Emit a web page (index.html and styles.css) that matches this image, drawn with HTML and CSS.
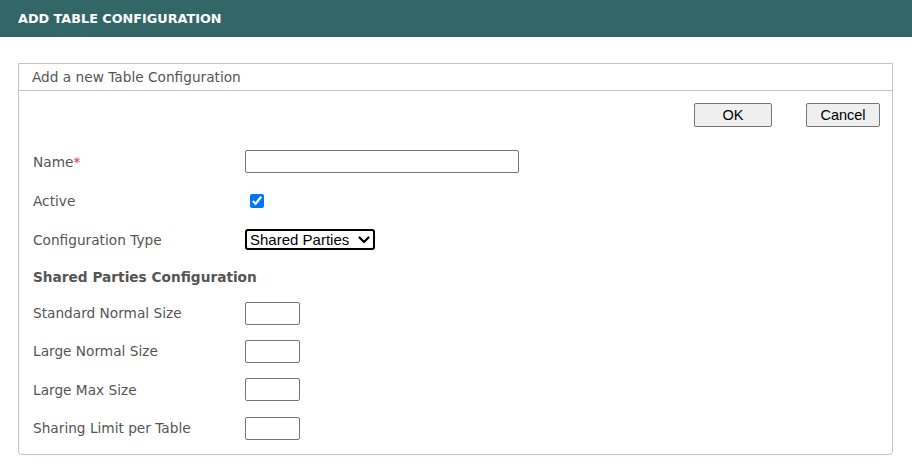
FILE: index.html
```html
<!DOCTYPE html>
<html>
<head>
<meta charset="utf-8">
<link rel="stylesheet" href="styles.css">
</head>
<body>
<div class="titlebar">ADD TABLE CONFIGURATION</div>
<div class="panel">
  <div class="panel-head">Add a new Table Configuration</div>
  <div class="panel-body">
    <div class="actions">
      <button class="btn btn-ok">OK</button>
      <button class="btn btn-cancel">Cancel</button>
    </div>
    <div class="row">
      <label class="lbl">Name<span class="req">*</span></label>
      <input class="txt txt-name" type="text">
    </div>
    <div class="row">
      <label class="lbl">Active</label>
      <input class="chk" type="checkbox" checked>
    </div>
    <div class="row">
      <label class="lbl">Configuration Type</label>
      <span class="sel-wrap">
        <select class="sel"><option>Shared Parties</option></select>
        <svg class="chev" width="12" height="8" viewBox="0 0 12 8"><path d="M1.5 1.5 L6 6 L10.5 1.5" fill="none" stroke="#000" stroke-width="2.2" stroke-linecap="round" stroke-linejoin="round"/></svg>
      </span>
    </div>
    <div class="row section">Shared Parties Configuration</div>
    <div class="row row-small">
      <label class="lbl">Standard Normal Size</label>
      <input class="txt txt-small" type="text">
    </div>
    <div class="row row-small">
      <label class="lbl">Large Normal Size</label>
      <input class="txt txt-small" type="text">
    </div>
    <div class="row row-small">
      <label class="lbl">Large Max Size</label>
      <input class="txt txt-small" type="text">
    </div>
    <div class="row row-small">
      <label class="lbl">Sharing Limit per Table</label>
      <input class="txt txt-small" type="text">
    </div>
  </div>
</div>
</body>
</html>
```
FILE: styles.css
```css
html, body {
  margin: 0;
  padding: 0;
  background: #fff;
}
body {
  font-family: "DejaVu Sans", Verdana, sans-serif;
  font-size: 13.7px;
  color: #555;
}
.titlebar {
  height: 37px;
  background: #336666;
  color: #fff;
  font-weight: bold;
  font-size: 12.8px;
  line-height: 38px;
  padding-left: 18px;
}
.panel {
  margin: 26px 19px 0 18px;
  border: 1px solid #c4c2d2;
  border-radius: 0 0 4px 4px;
}
.panel-head {
  height: 26px;
  line-height: 26px;
  padding-left: 13px;
  border-bottom: 1px solid #c4c2d2;
  color: #555;
}
.panel-body {
  padding: 0 12px 7px 14px;
}
.actions {
  display: flex;
  justify-content: flex-end;
  gap: 34px;
  padding: 12px 0 15px;
}
.btn {
  height: 24px;
  background: #efefef;
  border: 1px solid #767676;
  border-radius: 2px;
  font-family: "Liberation Sans", Arial, sans-serif;
  font-size: 14.5px;
  color: #000;
  padding: 0;
}
.btn-ok { width: 78px; }
.btn-cancel { width: 74px; }
.row {
  display: flex;
  align-items: center;
  height: 39px;
}
.row-small {
  height: 38.33px;
}
.lbl {
  width: 212px;
  flex: none;
}
.req { color: #e03030; }
.section {
  font-weight: bold;
  height: 35px;
}
.txt {
  box-sizing: border-box;
  height: 23px;
  border: 1px solid #767676;
  border-radius: 2px;
  margin: 0;
  padding: 1px 2px;
}
.txt-name { width: 274px; }
.txt-small { width: 55px; }
.chk {
  width: 14px;
  height: 14px;
  margin: 0 0 0 5px;
  accent-color: #0075ff;
}
.sel-wrap {
  position: relative;
  display: inline-flex;
}
.sel {
  box-sizing: border-box;
  width: 130px;
  height: 21px;
  margin: 0;
  border: 2px solid #000;
  border-radius: 3px;
  font-family: "Liberation Sans", Arial, sans-serif;
  font-size: 15px;
  color: #000;
  background: #fff;
  padding: 0 0 0 3px;
  appearance: none;
  -webkit-appearance: none;
}
.chev {
  position: absolute;
  right: 5px;
  top: 7px;
  pointer-events: none;
}
```
